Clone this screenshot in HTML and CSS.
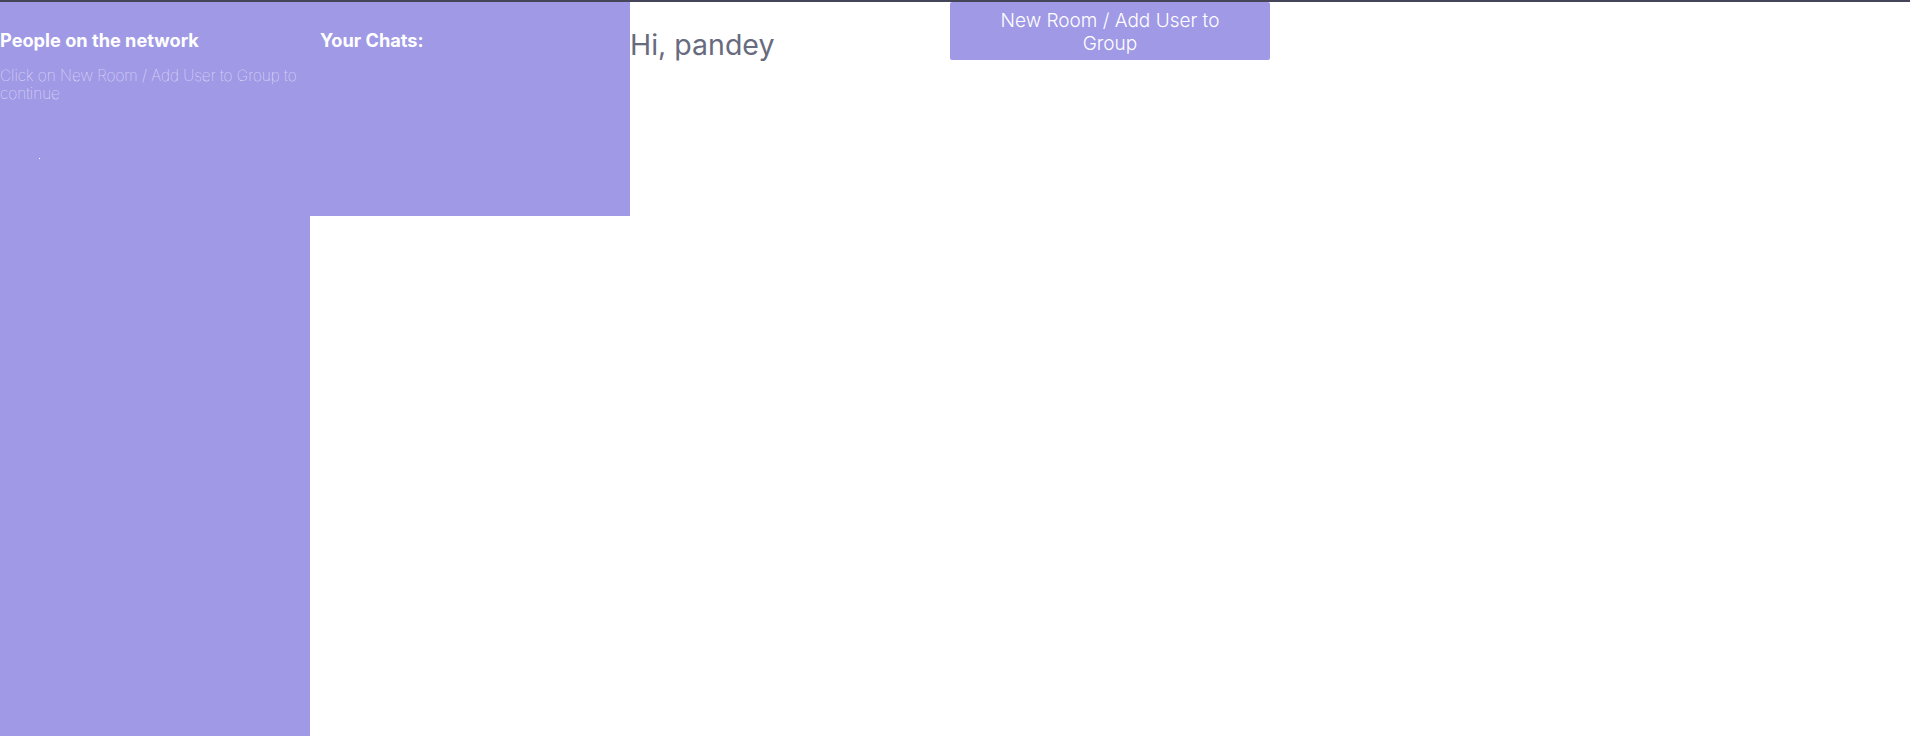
FILE: index.html
```html
<!DOCTYPE html>
<html>
<head>
<meta charset="utf-8">
<link rel="stylesheet" href="styles.css">
</head>
<body>
<div class="app">
  <aside class="people">
    <h3 class="title">People on the network</h3>
    <p class="hint">Click on New Room / Add User to Group to continue</p>
    <span class="dot"></span>
  </aside>
  <section class="chats">
    <h3 class="title chats-title">Your Chats:</h3>
  </section>
  <main class="main">
    <h1 class="greeting">Hi, pandey</h1>
    <button class="new-room">New Room / Add User to Group</button>
  </main>
</div>
</body>
</html>
```
FILE: styles.css
```css
html, body {
  margin: 0;
  padding: 0;
  background: #ffffff;
}
body {
  border-top: 2px solid #45455a;
  font-family: Inter, "Noto Sans", sans-serif;
  height: 734px;
  overflow: hidden;
}
.app {
  display: flex;
  align-items: flex-start;
  height: 734px;
}
.people {
  width: 310px;
  height: 734px;
  background: #9f99e6;
  color: #ffffff;
  flex-shrink: 0;
  display: flex;
  flex-direction: column;
}
.chats {
  width: 320px;
  height: 214px;
  background: #9f99e6;
  color: #ffffff;
  flex-shrink: 0;
}
.title {
  margin: 26px 0 0 0;
  font-size: 18.2px;
  font-weight: 700;
  line-height: 24px;
}
.chats-title {
  padding-left: 10px;
}
.hint {
  margin: 15px 0 0 0;
  font-size: 15.4px;
  font-weight: 100;
  line-height: 18px;
  color: #f2f0ff;
}
.dot {
  width: 1px;
  height: 1px;
  background: #ffffff;
  margin: 55px 0 0 39px;
}
.main {
  display: flex;
  align-items: flex-start;
}
.greeting {
  width: 320px;
  margin: 25px 0 0 0;
  font-size: 28.5px;
  font-weight: 400;
  line-height: 36px;
  color: #676b7e;
}
.new-room {
  width: 320px;
  height: 58px;
  border: none;
  border-radius: 2px;
  background: #9f99e6;
  color: #ffffff;
  font-family: Inter, "Noto Sans", sans-serif;
  font-size: 19px;
  font-weight: 300;
  line-height: 23px;
  padding: 2px 40px 0 40px;
}
```
